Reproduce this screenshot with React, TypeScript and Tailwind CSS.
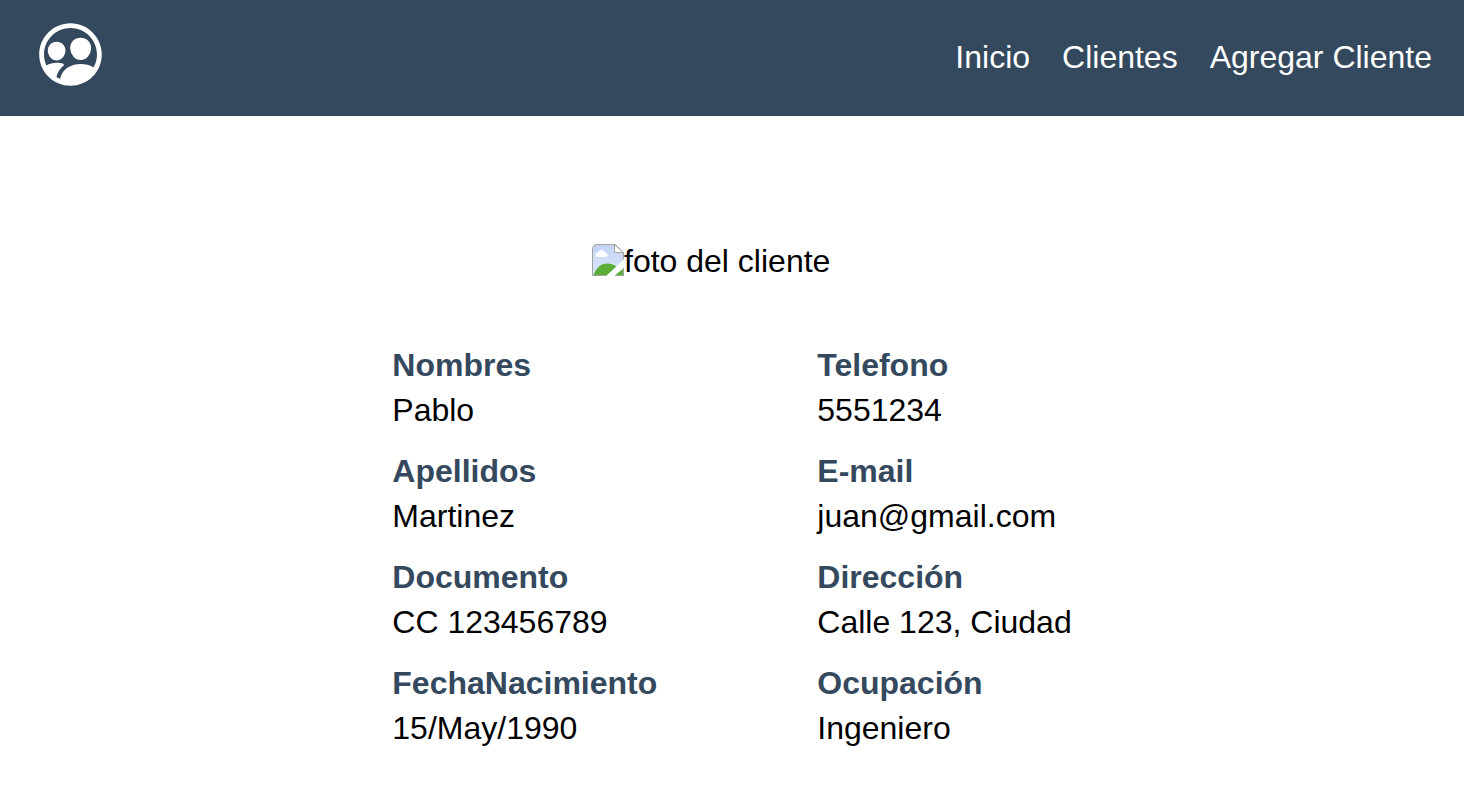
import { IoPeopleCircleOutline } from "react-icons/io5";

const columns = [
  [
    { label: "Nombres", value: "Pablo" },
    { label: "Apellidos", value: "Martinez" },
    { label: "Documento", value: "CC 123456789" },
    { label: "FechaNacimiento", value: "15/May/1990" },
  ],
  [
    { label: "Telefono", value: "5551234" },
    { label: "E-mail", value: "juan@gmail.com" },
    { label: "Dirección", value: "Calle 123, Ciudad" },
    { label: "Ocupación", value: "Ingeniero" },
  ],
];

const links = ["Inicio", "Clientes", "Agregar Cliente"];

function PhotoPlaceholder() {
  return (
    <svg viewBox="0 0 32 32" className="size-8 shrink-0" aria-hidden="true">
      <defs>
        <linearGradient id="sky" x1="0" y1="0" x2="0" y2="1">
          <stop offset="0" stopColor="#c3d3f5" />
          <stop offset="1" stopColor="#dbe6fb" />
        </linearGradient>
        <clipPath id="sheet">
          <path d="M6 0H23L32 9V32H0V6Q0 0 6 0Z" />
        </clipPath>
      </defs>
      <g clipPath="url(#sheet)">
        <rect width="32" height="32" fill="url(#sky)" />
        <path d="M5 13C3 13 2.500 9 6 8.500C7 5 12 5 13 8.500C16.500 9 16 13 14 13Z" fill="#fff" />
        <path d="M1 32C4 24 9 19.500 15 19.500C22 19.500 28 24 31 32Z" fill="#5aad35" />
        <path d="M23 32L32 24V32Z" fill="#5aad35" />
        <path d="M14 32L32 15.500V23.500L22.500 32Z" fill="#fff" />
      </g>
      <path d="M31.500 15V9L23 .5H6Q.5 .5 .5 6V31.500H14M23 31.500H31.500V24" fill="none" stroke="#a3a3a3" />
      <path d="M22.500 .5V8.500H31.500Z" fill="#fff" stroke="#a3a3a3" />
    </svg>
  );
}

export default function App() {
  return (
    <div className="min-h-screen bg-white font-['Liberation_Sans',Arial,sans-serif] text-[32px] leading-[34px] text-black">
      <header className="flex items-start justify-between bg-[#34495e] px-8 pt-4 pb-[23px] text-white">
        <a href="#inicio" aria-label="Inicio">
          <IoPeopleCircleOutline className="block size-[77px]" />
        </a>
        <nav className="flex gap-8 pt-6">
          {links.map((link) => (
            <a key={link} href={"#" + link.toLowerCase().replace(" ", "-")}>
              {link}
            </a>
          ))}
        </nav>
      </header>
      <main className="flex flex-col items-center gap-[70px] pt-32 pb-10">
        <div className="flex w-[280px] items-start">
          <PhotoPlaceholder />
          <span className="whitespace-nowrap">foto del cliente</span>
        </div>
        <div className="flex justify-center gap-40">
          {columns.map((fields) => (
            <dl key={fields[0].label} className="flex flex-col gap-[27px]">
              {fields.map(({ label, value }) => (
                <div key={label} className="flex flex-col gap-[11px]">
                  <dt className="font-bold text-[#34495e]">{label}</dt>
                  <dd>{value}</dd>
                </div>
              ))}
            </dl>
          ))}
        </div>
      </main>
    </div>
  );
}
